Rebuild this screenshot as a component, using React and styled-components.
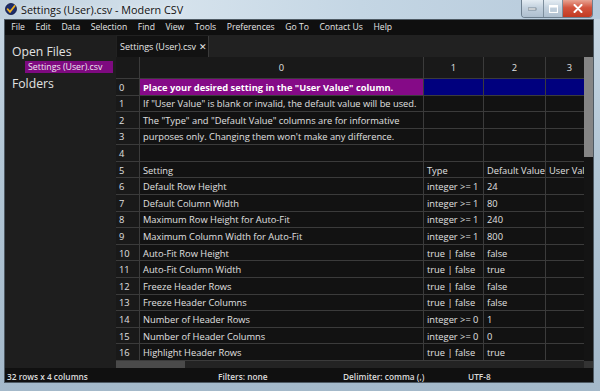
import React from 'react'
import styled, { createGlobalStyle } from 'styled-components'

const GlobalStyle = createGlobalStyle`
  html, body { margin: 0; padding: 0; background: #9fb4c6; }
  body { font-family: "Open Sans", "Liberation Sans", sans-serif; }
  * { box-sizing: border-box; }
`;

const Window = styled.div`
  width: 600px;
  height: 391px;
  display: flex;
  flex-direction: column;
  background: linear-gradient(180deg, #c9d8e4 0%, #b3c7d6 40%, #a4b9ca 100%);
  overflow: hidden;
`;

const TitleBar = styled.div`
  height: 21px;
  display: flex;
  align-items: center;
  padding-left: 5px;
  background: linear-gradient(90deg, #bfd0de 0%, #d5e2ec 30%, #c4d6e4 60%, #b7cadb 100%);
`;

const TitleText = styled.span`
  margin-left: 4px;
  font-size: 10.8px;
  color: #111;
  text-shadow: 0 0 6px rgba(255,255,255,0.9);
`;

const Controls = styled.div`
  margin-left: auto;
  margin-right: 7px;
  align-self: flex-start;
  display: flex;
  height: 18px;
  border: 1px solid #6d7f8f;
  border-top: none;
  border-radius: 0 0 4px 4px;
  overflow: hidden;
`;

const CtrlButton = styled.div`
  width: ${p => p.$w}px;
  height: 100%;
  display: flex;
  align-items: center;
  justify-content: center;
  background: ${p => p.$close
    ? 'linear-gradient(180deg, #e8a493 0%, #d2543e 45%, #c23a22 100%)'
    : 'linear-gradient(180deg, #e4ecf3 0%, #c3d1de 45%, #aebfcf 100%)'};
  border-left: ${p => p.$first ? 'none' : '1px solid #7d8e9d'};
`;

const Body = styled.div`
  flex: 1;
  display: flex;
  flex-direction: column;
  margin: 0 6px 8px 4px;
  background: #1f1f1f;
  border: 1px solid #4e5a64;
`;

const MenuBar = styled.div`
  height: 15px;
  display: flex;
  align-items: center;
  background: #0f0f0f;
  padding-left: 1px;
`;

const MenuItem = styled.span`
  font-size: 8.6px;
  color: #e6e6e6;
  padding: 0 5.3px;
  line-height: 15px;
`;

const Main = styled.div`
  flex: 1;
  display: flex;
  min-height: 0;
`;

const Sidebar = styled.div`
  width: 111px;
  background: #1e1e1e;
  padding: 9px 0 0 7px;
  display: flex;
  flex-direction: column;
`;

const SideHeading = styled.div`
  font-size: 12.2px;
  color: #e2e2e2;
  line-height: 16px;
  margin-top: ${p => p.$mt || 0}px;
`;

const SideFile = styled.div`
  margin: 1px 3px 0 13px;
  background: #7e0a80;
  color: #f0e8f0;
  font-size: 8.8px;
  line-height: 12px;
  padding-left: 3px;
  white-space: nowrap;
`;

const Editor = styled.div`
  flex: 1;
  display: flex;
  flex-direction: column;
  min-width: 0;
  background: #1c1c1c;
`;

const TabBar = styled.div`
  height: 22px;
  display: flex;
  align-items: flex-end;
  padding-left: 1px;
  background: #212121;
`;

const Tab = styled.div`
  height: 21px;
  width: 92px;
  background: #121212;
  border-right: 1px solid #3a3a3a;
  color: #e8e8e8;
  font-size: 9px;
  white-space: nowrap;
  display: flex;
  align-items: center;
  padding-left: 3px;
  gap: 3px;
`;

const GridArea = styled.div`
  flex: 1;
  display: flex;
  min-height: 0;
`;

const Grid = styled.div`
  flex: 1;
  overflow: hidden;
  display: grid;
  grid-template-columns: 24px 284px 60px 62px 48px;
  grid-template-rows: 22px;
  grid-auto-rows: 16.6px;
  align-content: start;
  background: #111;
`;

const Cell = styled.div`
  border-right: 1px solid #3b3b3b;
  border-bottom: 1px solid #3b3b3b;
  background: ${p => p.$bg || (p.$head ? '#191919' : '#121212')};
  color: ${p => p.$bold ? '#ffffff' : '#e0e0e0'};
  font-size: 9.3px;
  font-weight: ${p => p.$bold ? 700 : 400};
  display: flex;
  align-items: center;
  padding-top: 1px;
  justify-content: ${p => p.$center ? 'center' : 'flex-start'};
  padding-left: ${p => p.$center ? 0 : 3}px;
  white-space: nowrap;
  overflow: hidden;
`;

const VScroll = styled.div`
  width: 9px;
  display: flex;
  flex-direction: column;
  background: #141414;
`;

const VThumb = styled.div`
  height: 100px;
  background: #858585;
`;

const HScrollRow = styled.div`
  height: 7px;
  display: flex;
  background: #232323;
`;

const HThumb = styled.div`
  width: 69px;
  background: #4a4a4a;
`;

const Corner = styled.div`
  margin-left: auto;
  width: 9px;
  background: #333;
`;

const StatusBar = styled.div`
  height: 14px;
  display: flex;
  align-items: flex-end;
  background: #101010;
  color: #dcdcdc;
  font-size: 8.3px;
  font-weight: 600;
`;

const StatusItem = styled.span`
  width: ${p => p.$w}px;
  padding-left: ${p => p.$pl || 0}px;
`;

const menus = ['File', 'Edit', 'Data', 'Selection', 'Find', 'View', 'Tools', 'Preferences', 'Go To', 'Contact Us', 'Help']

const rows = [
  ['Place your desired setting in the "User Value" column.', '', '', ''],
  ['If "User Value" is blank or invalid, the default value will be used.', '', '', ''],
  ['The "Type" and "Default Value" columns are for informative', '', '', ''],
  ["purposes only. Changing them won't make any difference.", '', '', ''],
  ['', '', '', ''],
  ['Setting', 'Type', 'Default Value', 'User Value'],
  ['Default Row Height', 'integer >= 1', '24', ''],
  ['Default Column Width', 'integer >= 1', '80', ''],
  ['Maximum Row Height for Auto-Fit', 'integer >= 1', '240', ''],
  ['Maximum Column Width for Auto-Fit', 'integer >= 1', '800', ''],
  ['Auto-Fit Row Height', 'true | false', 'false', ''],
  ['Auto-Fit Column Width', 'true | false', 'true', ''],
  ['Freeze Header Rows', 'true | false', 'false', ''],
  ['Freeze Header Columns', 'true | false', 'false', ''],
  ['Number of Header Rows', 'integer >= 0', '1', ''],
  ['Number of Header Columns', 'integer >= 0', '0', ''],
  ['Highlight Header Rows', 'true | false', 'true', ''],
]

const AppIcon = () => (
  <svg width="12" height="12" viewBox="0 0 12 12">
    <circle cx="6" cy="6" r="5.5" fill="#1d2d6b" stroke="#0d1640" strokeWidth="0.8" />
    <path d="M2.6 6.2 L5 8.8 L9.6 3" fill="none" stroke="#f2b320" strokeWidth="1.8" strokeLinecap="round" />
  </svg>
)

export default function App() {
  return (
    <Window>
      <GlobalStyle />
      <TitleBar>
        <AppIcon />
        <TitleText>Settings (User).csv - Modern CSV</TitleText>
        <Controls>
          <CtrlButton $w={21} $first>
            <svg width="9" height="4"><rect x="0" y="1" width="8" height="2" fill="#fff" stroke="#4a5a68" strokeWidth="0.6" /></svg>
          </CtrlButton>
          <CtrlButton $w={19}>
            <svg width="9" height="8"><rect x="0.5" y="0.5" width="8" height="7" fill="none" stroke="#fff" strokeWidth="1.2" /><rect x="0.5" y="0.5" width="8" height="2" fill="#fff" /></svg>
          </CtrlButton>
          <CtrlButton $w={30} $close>
            <svg width="10" height="9"><path d="M1.5 1 L8.5 8 M8.5 1 L1.5 8" stroke="#fff" strokeWidth="2" strokeLinecap="round" /></svg>
          </CtrlButton>
        </Controls>
      </TitleBar>
      <Body>
        <MenuBar>
          {menus.map(m => <MenuItem key={m}>{m}</MenuItem>)}
        </MenuBar>
        <Main>
          <Sidebar>
            <SideHeading>Open Files</SideHeading>
            <SideFile>Settings (User).csv</SideFile>
            <SideHeading $mt={3}>Folders</SideHeading>
          </Sidebar>
          <Editor>
            <TabBar>
              <Tab>Settings (User).csv <span>✕</span></Tab>
            </TabBar>
            <GridArea>
              <Grid>
                <Cell $head />
                {['0', '1', '2', '3'].map(h => <Cell key={h} $head $center>{h}</Cell>)}
                {rows.map((r, i) => (
                  <React.Fragment key={i}>
                    <Cell $head>{i}</Cell>
                    {r.map((v, j) => (
                      <Cell
                        key={j}
                        $bold={i === 0}
                        $bg={i === 0 ? (j === 0 ? '#850a87' : '#00007e') : undefined}
                      >{v}</Cell>
                    ))}
                  </React.Fragment>
                ))}
              </Grid>
              <VScroll>
                <VThumb />
              </VScroll>
            </GridArea>
            <HScrollRow>
              <HThumb />
              <Corner />
            </HScrollRow>
          </Editor>
        </Main>
        <StatusBar>
          <StatusItem $w={213} $pl={2}>32 rows x 4 columns</StatusItem>
          <StatusItem $w={125}>Filters: none</StatusItem>
          <StatusItem $w={125}>Delimiter: comma (,)</StatusItem>
          <StatusItem $w={60}>UTF-8</StatusItem>
        </StatusBar>
      </Body>
    </Window>
  )
}
